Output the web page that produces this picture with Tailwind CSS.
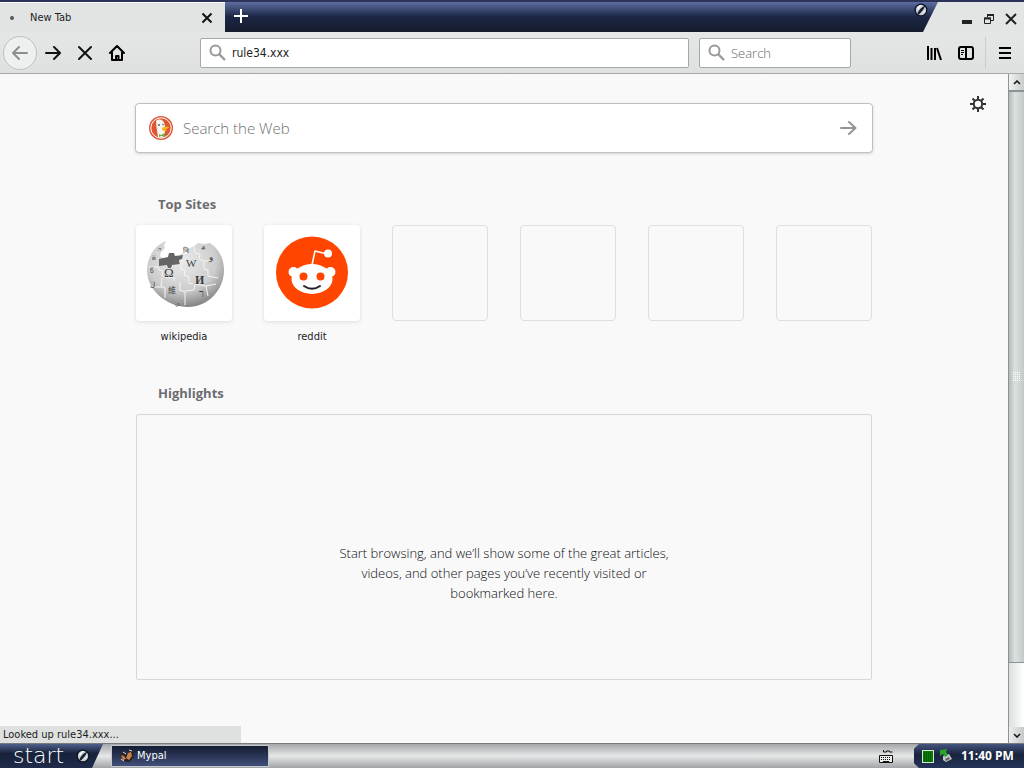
<!DOCTYPE html>
<html lang="en">
<head>
  <meta charset="UTF-8">
  <meta name="viewport" content="width=device-width, initial-scale=1.0">
  <title>New Tab - Mypal</title>
  <script src="https://cdn.jsdelivr.net/npm/@tailwindcss/browser@4"></script>
</head>
<body class="h-screen flex flex-col overflow-hidden bg-[#f9f9fa] text-[#1c1c1e] font-['Open_Sans','Noto_Sans',sans-serif]">

  <!-- Title bar -->
  <header class="relative h-8 shrink-0 flex border-t-2 border-[#2b3458] bg-[#e3e5e5]">
    <div class="w-[225px] flex items-center pl-[10px] pr-[10px] border-t border-white bg-[#e2e4e4]">
      <span class="size-1 rounded-full bg-[#555]"></span>
      <span class="ml-4 flex-1 font-['DejaVu_Sans_Condensed','DejaVu_Sans',sans-serif] text-[11px] leading-4">New Tab</span>
      <button aria-label="Close tab" class="size-4 flex items-center justify-center">
        <svg width="12" height="12" viewBox="0 0 12 12" fill="none" stroke="#111" stroke-width="2"><path d="M1.5 1.5l9 9M10.5 1.5l-9 9"/></svg>
      </button>
    </div>
    <div class="flex-1 flex justify-between bg-linear-to-b from-[#606fa4] via-[#1b2643] via-50% to-[#151d2d] [clip-path:polygon(0_0,100%_0,calc(100%-15px)_100%,0_100%)]">
      <button aria-label="Open a new tab" class="w-8 flex items-center justify-center pb-[2px]">
        <svg width="14" height="14" viewBox="0 0 14 14" stroke="#fff" stroke-width="2"><path d="M7 0v14M0 7h14"/></svg>
      </button>
      <svg class="mr-[10px] mt-px" width="14" height="14" viewBox="0 0 14 14"><circle cx="7" cy="7" r="6.500" fill="#0c111e"/><circle cx="7" cy="7" r="5.200" fill="#c3cbd3"/><path d="M3.500 11C4 8 7 4.500 11.500 2.500L9 7 5 11.500z" fill="#141b2b"/><path d="M3 5l3-3 2 0-4 5z" fill="#f2f5f7"/><path d="M7 11l4-5 0 3z" fill="#e6eaee"/></svg>
    </div>
    <div class="w-[86px] flex items-center justify-end gap-[10px] pr-[7px] pt-[3px]">
      <button aria-label="Minimize"><svg width="12" height="12" viewBox="0 0 12 12"><path d="M1 7h10v4H1z" fill="#222"/></svg></button>
      <button aria-label="Restore"><svg width="12" height="12" viewBox="0 0 12 12" fill="none" stroke="#222"><path d="M4.500 4V1.500h6v6H8"/><path d="M4 2h7" stroke-width="2"/><path d="M1.500 5h6v5.500h-6z"/><path d="M1 5.500h7" stroke-width="2"/></svg></button>
      <button aria-label="Close window"><svg width="12" height="12" viewBox="0 0 12 12" stroke="#222" stroke-width="2"><path d="M1 1l10 10M11 1L1 11"/></svg></button>
    </div>
  </header>

  <!-- Navigation toolbar -->
  <nav class="h-[42px] shrink-0 flex items-center border-b border-[#a6a9ab] bg-linear-to-b from-[#e5e7e7] to-[#dfe0e0]">
    <div class="w-[200px] shrink-0 flex items-center">
      <button aria-label="Back" class="ml-[3px] size-[34px] flex items-center justify-center rounded-full border border-[#bfc1c1] bg-[#eef0f0]">
        <svg width="16" height="16" viewBox="0 0 16 16" fill="none" stroke="#8d8f8f" stroke-width="2" stroke-linecap="round" stroke-linejoin="round"><path d="M15 8H1.500M7 2L1 8l6 6"/></svg>
      </button>
      <button aria-label="Forward" class="w-8 flex items-center justify-center">
        <svg width="16" height="16" viewBox="0 0 16 16" fill="none" stroke="#111" stroke-width="2" stroke-linecap="round" stroke-linejoin="round"><path d="M1 8h13.500M9 2l6 6-6 6"/></svg>
      </button>
      <button aria-label="Stop" class="w-8 flex items-center justify-center">
        <svg width="16" height="16" viewBox="0 0 16 16" fill="none" stroke="#111" stroke-width="2" stroke-linecap="round"><path d="M2 2l12 12M14 2L2 14"/></svg>
      </button>
      <button aria-label="Home" class="w-8 flex items-center justify-center">
        <svg width="16" height="16" viewBox="0 0 16 16" fill="none" stroke="#000" stroke-width="2" stroke-linejoin="round" stroke-linecap="round"><path d="M1 8l7-7 7 7M3 7.500V15h10V7.500"/><path d="M7 15v-4h2.500v4" /></svg>
      </button>
    </div>
    <label class="flex-1 h-[30px] flex items-center gap-[6px] pl-2 border border-[#a5a8aa] rounded-[2px] bg-white">
      <svg width="17" height="17" viewBox="0 0 17 17" fill="none" stroke="#999" stroke-width="2"><circle cx="6.500" cy="6.500" r="5"/><path d="M10 10l6 6" stroke-width="2.400"/></svg>
      <input type="text" aria-label="Address" value="rule34.xxx" class="flex-1 min-w-0 font-['DejaVu_Sans_Condensed','DejaVu_Sans',sans-serif] text-[12px] leading-5 outline-none">
    </label>
    <label class="ml-[10px] w-[152px] h-[30px] flex items-center gap-[6px] pl-2 border border-[#a5a8aa] rounded-[2px] bg-white">
      <svg width="17" height="17" viewBox="0 0 17 17" fill="none" stroke="#999" stroke-width="2"><circle cx="6.500" cy="6.500" r="5"/><path d="M10 10l6 6" stroke-width="2.400"/></svg>
      <input type="text" aria-label="Search" placeholder="Search" class="flex-1 min-w-0 text-[13px] leading-5 font-light outline-none placeholder:text-[#666]">
    </label>
    <div class="w-[173px] shrink-0 flex items-center justify-end pr-[11px]">
      <button aria-label="Library"><svg width="16" height="16" viewBox="0 0 16 16" stroke="#000" stroke-width="2"><path d="M2 1v14M5.500 3v12M9 3v12M11 3l4 12"/></svg></button>
      <button aria-label="Sidebars" class="ml-4"><svg width="16" height="16" viewBox="0 0 16 16" fill="none" stroke="#000" stroke-width="2"><rect x="1" y="2" width="14" height="12" rx="2"/><path d="M8 2v12"/><path d="M3 5.500h3M3 7.500h3M3 9.500h2" stroke-width="1"/></svg></button>
      <span class="ml-[11px] w-px h-8 bg-[#cbcdcd]"></span>
      <button aria-label="Open menu" class="ml-[11px]"><svg width="16" height="16" viewBox="0 0 16 16" stroke="#000" stroke-width="2"><path d="M2 3h12M2 8h12M2 13h12"/></svg></button>
    </div>
  </nav>

  <div class="relative flex-1 min-h-0 flex">
    <!-- New tab page -->
    <main class="relative flex-1 px-[136px] pt-[29px] overflow-hidden">
      <button aria-label="Customize your New Tab page" class="absolute top-[22px] right-[22px]">
        <svg width="16" height="16" viewBox="0 0 16 16" fill="none" stroke="#333" stroke-width="2"><circle cx="8" cy="8" r="4.200"/><path d="M8 0v4M8 12v4M0 8h4M12 8h4M2.500 2.500l2.500 2.500M11 11l2.500 2.500M13.500 2.500L11 5M5 11l-2.500 2.500"/></svg>
      </button>

      <form class="-mx-px h-[50px] flex items-center pl-[13px] pr-[15px] rounded-[4px] border border-[#bfbfc0] bg-white shadow-[0_1px_3px_rgba(0,0,0,0.15)]">
        <svg width="24" height="24" viewBox="0 0 24 24">
          <circle cx="12" cy="12" r="12" fill="#de5833"/><circle cx="12" cy="12" r="10.200" fill="none" stroke="#fff" stroke-width="1"/>
          <path d="M7 5c3-3 8-1 8.500 3l1 5-1.500 8c-2 1-4 1-6 0L7.500 11z" fill="#f6f4ef"/>
          <circle cx="10" cy="9" r="1" fill="#476"/><circle cx="14" cy="8.500" r="0.800" fill="#476"/>
          <path d="M13 12c2-1.500 4-1.500 7-1-1 2-3 2-4 2.500l2 1c-2 1.500-5 1-5-2.500z" fill="#fdb517"/>
          <path d="M10 18l2 1 4-2v4l-4-1-2 1z" fill="#6bae45"/>
        </svg>
        <input type="text" aria-label="Search the Web" placeholder="Search the Web" class="ml-[10px] flex-1 min-w-0 text-[15px] leading-6 font-light outline-none placeholder:text-[#707070]">
        <button aria-label="Submit search"><svg width="17" height="16" viewBox="0 0 17 16" fill="none" stroke="#949494" stroke-width="2" stroke-linecap="round" stroke-linejoin="round"><path d="M1 8h14M9 2l6.500 6L9 14"/></svg></button>
      </form>

      <section class="mt-[41px]">
        <h2 class="pl-[22px] text-[13px] leading-5 font-bold text-[#6c6c6e]">Top Sites</h2>
        <div class="mt-[11px] flex justify-between font-['DejaVu_Sans_Condensed','DejaVu_Sans',sans-serif] text-[11px] leading-4 text-center">
          <a href="#" class="w-24">
            <span class="block size-24 rounded-[4px] bg-white shadow-[0_1px_4px_rgba(12,12,13,0.12)]">
              <svg width="96" height="96" viewBox="0 0 96 96">
                <defs><radialGradient id="globe" cx="0.45" cy="0.3" r="0.75"><stop offset="0" stop-color="#ebebeb"/><stop offset="0.600" stop-color="#cdcdcd"/><stop offset="1" stop-color="#777"/></radialGradient></defs>
                <path d="M30 16l-2 4 1 3-4 4-1 4 4 3 14 1 3-7 6 1 1-5 6-3 4-3 6 1 6-1c8 5 14 15 14 27 0 20-16 37-36 37S11 66 11 45c0-13 8-25 19-29z" fill="url(#globe)"/>
                <path d="M23 34l9-2 1-4 5 0 1 3 8-1-1 4-3 1 1 4-8 1-1 3-3 0-1-3-8 1z" fill="#666"/>
                <path d="M13 42h9l1 3 4 1-1 5 6 2 6-1v4M44 36l1 8 4 1-1 5 5 2v6l4 1M58 21l1 7 5 1-1 5 5 2 8 0M68 37v7l4 1 0 6 10 2M26 53l-1 8 4 2v10M26 62l-10 0M44 57v8l5 2v13M49 66l9-1 1-6 11 2 2 10M70 61l10-2" fill="none" stroke="#f4f4f4" stroke-width="1"/>
                <g fill="#3c3c3c" font-family="Liberation Serif, Noto Sans CJK SC, serif">
                  <text x="28" y="52" font-size="13">Ω</text><text x="50" y="42" font-size="11">W</text>
                  <text x="59" y="59" font-size="12" font-weight="bold">И</text><text x="32" y="68" font-size="8">維</text>
                  <text x="73" y="35" font-size="9">و</text><text x="63" y="72" font-size="10">ר</text>
                  <text x="47" y="28" font-size="7">वि</text><text x="65" y="25" font-size="7">ቆ</text>
                  <text x="14" y="48" font-size="7">წ</text><text x="14" y="62" font-size="7">ل</text>
                  <text x="16" y="35" font-size="7">й</text><text x="22" y="26" font-size="6">ה</text><text x="39" y="81" font-size="6">ம</text>
                </g>
              </svg>
            </span>
            <span class="block mt-2">wikipedia</span>
          </a>
          <a href="#" class="w-24">
            <span class="block size-24 rounded-[4px] bg-white shadow-[0_1px_4px_rgba(12,12,13,0.12)]">
              <svg width="96" height="96" viewBox="0 0 96 96">
                <circle cx="48" cy="47.500" r="36" fill="#ff4500"/>
                <path d="M48 40l3-14 12 3" fill="none" stroke="#fff" stroke-width="1.600" stroke-linejoin="round"/>
                <circle cx="64" cy="28.500" r="4" fill="#fff"/>
                <circle cx="29.500" cy="47" r="5" fill="#fff"/><circle cx="66.500" cy="47" r="5" fill="#fff"/>
                <ellipse cx="48" cy="54" rx="20.500" ry="15" fill="#fff"/>
                <circle cx="39.500" cy="51.500" r="4" fill="#ff4500"/><circle cx="56.500" cy="51.500" r="4" fill="#ff4500"/>
                <path d="M40 61c5 3.500 11 3.500 16 0" fill="none" stroke="#222" stroke-width="2" stroke-linecap="round"/>
              </svg>
            </span>
            <span class="block mt-2">reddit</span>
          </a>
          <span class="size-24 rounded-[4px] border border-[#dfdfdf]"></span>
          <span class="size-24 rounded-[4px] border border-[#dfdfdf]"></span>
          <span class="size-24 rounded-[4px] border border-[#dfdfdf]"></span>
          <span class="size-24 rounded-[4px] border border-[#dfdfdf]"></span>
        </div>
      </section>

      <section class="mt-[38px]">
        <h2 class="pl-[22px] text-[13px] leading-5 font-bold text-[#6c6c6e]">Highlights</h2>
        <div class="mt-[11px] h-[266px] flex justify-center pt-32 border border-[#d7d7db] rounded-[2px]">
          <p class="w-[346px] text-[13px] leading-5 font-light text-center text-[#0c0c0d]">Start browsing, and we’ll show some of the great articles, videos, and other pages you’ve recently visited or bookmarked here.</p>
        </div>
      </section>
    </main>

    <!-- Scrollbar -->
    <div class="w-4 shrink-0 flex flex-col border-l border-[#8e9294] bg-linear-to-r from-[#dcdfdf] to-white">
      <div class="h-[17px] flex items-center justify-center border-b border-[#8e9294] bg-linear-to-r from-[#f0f2f2] to-[#c9cccc]">
        <svg width="8" height="5" viewBox="0 0 8 5" fill="none" stroke="#111" stroke-width="1.500"><path d="M1 4l3-3 3 3"/></svg>
      </div>
      <div class="h-[572px] flex items-center justify-center border-y border-[#8e9294] bg-linear-to-r from-[#b4baba] via-[#dde1e0] via-40% to-[#c3c8c8]">
        <svg width="8" height="10" viewBox="0 0 8 10" stroke="#fff" stroke-dasharray="1 1"><path d="M0 .5h8M0 2.500h8M0 4.500h8M0 6.500h8M0 8.500h8"/></svg>
      </div>
      <div class="flex-1"></div>
      <div class="h-4 flex items-center justify-center bg-linear-to-r from-[#eceeee] to-[#c6c9c9]">
        <svg width="8" height="5" viewBox="0 0 8 5" fill="none" stroke="#111" stroke-width="1.500"><path d="M1 1l3 3 3-3"/></svg>
      </div>
    </div>

    <!-- Status panel -->
    <div class="absolute left-0 bottom-0 w-[241px] h-[17px] pl-[3px] bg-[#dfe1e0] font-['DejaVu_Sans_Condensed','DejaVu_Sans',sans-serif] text-[11px] leading-[18px]">Looked up rule34.xxx...</div>
  </div>

  <!-- Taskbar -->
  <footer class="h-[25px] shrink-0 flex border-t border-[#777b7e] bg-linear-to-b from-[#a5a8aa] via-[#e6e8e8] via-50% to-[#a0a4a6] text-white">
    <button class="w-[103px] flex items-center pl-[13px] bg-linear-to-b from-[#4f5f8b] via-[#17223b] via-40% to-[#1f2b49] [clip-path:polygon(0_0,100%_0,calc(100%-11px)_100%,0_100%)]">
      <span class="w-[63px] text-left font-['DejaVu_Sans',sans-serif] text-[22px] leading-5 font-extralight">start</span>
      <svg width="14" height="14" viewBox="0 0 14 14"><circle cx="7" cy="7" r="6.500" fill="#0c111e"/><circle cx="7" cy="7" r="5.200" fill="#c3cbd3"/><path d="M3.500 11C4 8 7 4.500 11.500 2.500L9 7 5 11.500z" fill="#141b2b"/><path d="M3 5l3-3 2 0-4 5z" fill="#f2f5f7"/><path d="M7 11l4-5 0 3z" fill="#e6eaee"/></svg>
    </button>
    <button class="ml-2 my-px w-[158px] flex items-center gap-[3px] pl-2 border border-[#c4c8cc] bg-linear-to-b from-[#141d33] to-[#42507a] font-['DejaVu_Sans_Condensed','DejaVu_Sans',sans-serif] text-[11px] leading-4">
      <svg width="14" height="14" viewBox="0 0 14 14"><path d="M0 6l3-2 3 2 4-4 4 1-1 6-4 4-5-1-2-3z" fill="#2b211c"/><path d="M1 6l3 1 2 3-3 1zM8 4l3-1 1 4-3 4-3-2z" fill="#c98050"/><path d="M3 3l3 2M9 1l3 1M1 10l3 2" stroke="#e8d7c5"/></svg>
      Mypal
    </button>
    <div class="flex-1 flex items-center justify-end pr-[21px]">
      <svg width="14" height="14" viewBox="0 0 14 14" fill="none" stroke="#111"><path d="M4.500 1v2h3v-1h3v1h3"/><path d="M.5 13.500v-7h13v7z" fill="#eee"/><path d="M2 8.500h10M2 10.500h10" stroke-dasharray="1 1"/><path d="M4 12.500h6"/></svg>
    </div>
    <div class="w-[110px] flex items-center pl-2 bg-linear-to-b from-[#46557f] via-[#18233e] via-45% to-[#26345a] [clip-path:polygon(5px_0,100%_0,100%_100%,5px_100%,0_80%,0_20%)]">
      <svg width="12" height="13" viewBox="0 0 12 13"><rect x=".5" y=".5" width="11" height="12" fill="#087a08" stroke="#d7e6d7"/><path d="M2 3h8M2 5h8M2 7h8M2 9h8M2 11h8" stroke="#034003" stroke-dasharray="1 1"/></svg>
      <svg class="ml-[5px]" width="13" height="14" viewBox="0 0 13 14"><path d="M4 7l6-2 3 5-6 3-3-2z" fill="#c2c8c5"/><path d="M6 10l4-2 1 2-4 2z" fill="#666"/><path d="M1 1l7-1-1 3 2 3-3 2-2-3-3 2z" fill="#28a52a"/></svg>
      <time class="ml-[9px] text-[12px] leading-4 font-bold whitespace-nowrap">11:40 PM</time>
    </div>
  </footer>
</body>
</html>
